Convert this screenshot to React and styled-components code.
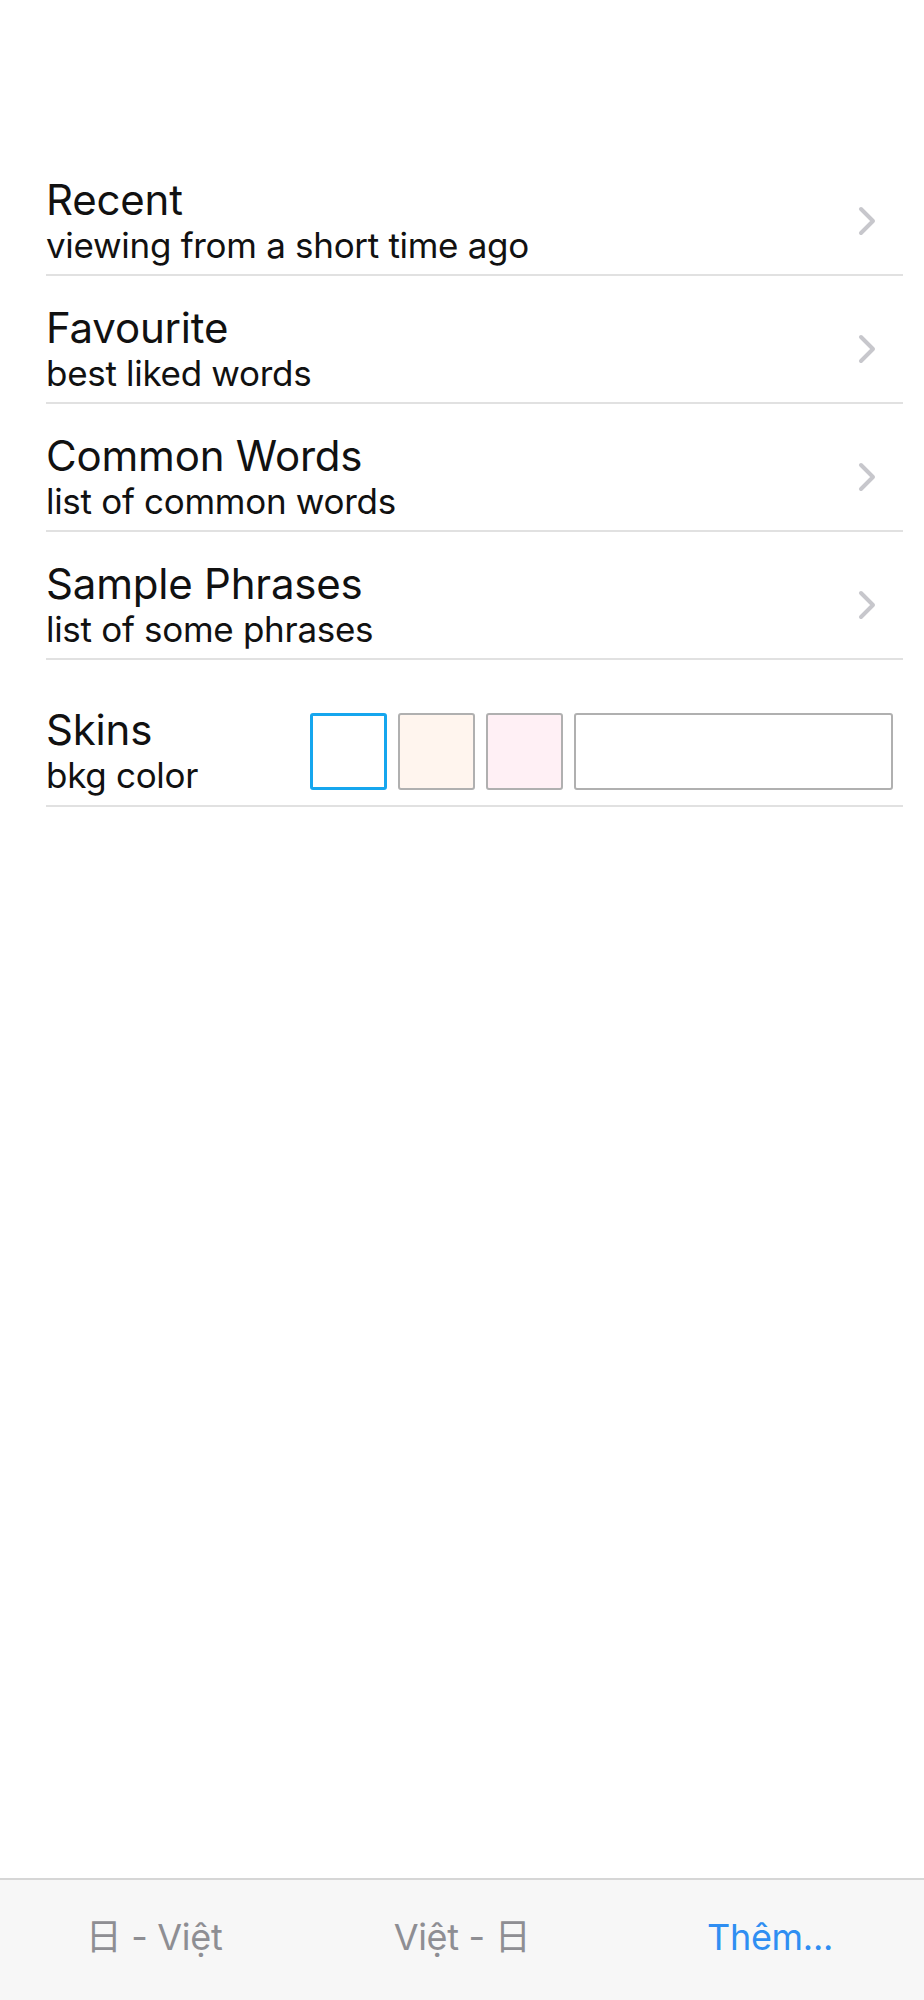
import React from "react";
import styled, { createGlobalStyle } from "styled-components";

const Global = createGlobalStyle`
  html, body { margin: 0; padding: 0; background: #ffffff; }
  body { font-family: Inter, "Liberation Sans", "Noto Sans CJK JP", sans-serif; }
  * { box-sizing: border-box; }
`;

const Screen = styled.div`
  min-height: 100vh;
  display: flex;
  flex-direction: column;
  background: #ffffff;
`;

const List = styled.div`
  padding: 148px 21px 0 46px;
  display: flex;
  flex-direction: column;
  flex: 1;
`;

const Row = styled.div`
  display: flex;
  align-items: center;
  justify-content: space-between;
  padding: ${(p) => (p.$skin ? "46px 10px 9px 0" : "28px 27px 8px 0")};
  border-bottom: 2px solid #e1e1e1;
`;

const TextBlock = styled.div`
  display: flex;
  flex-direction: column;
`;

const Title = styled.div`
  font-size: 42px;
  line-height: 48px;
  color: #111;
  letter-spacing: -0.2px;
`;

const Subtitle = styled.div`
  font-size: 35px;
  line-height: 42px;
  color: #111;
  letter-spacing: -0.3px;
`;

const Chevron = styled.svg`
  width: 18px;
  height: 30px;
  flex: none;
`;

const Swatches = styled.div`
  display: flex;
  gap: 11px;
  align-items: center;
`;

const Swatch = styled.div`
  width: ${(p) => (p.$wide ? "319px" : "77px")};
  height: 77px;
  background: ${(p) => p.$bg};
  border: ${(p) => (p.$active ? "3px solid #16a6ee" : "2px solid #b0b0b0")};
  border-radius: 3px;
`;

const TabBar = styled.div`
  height: 122px;
  background: #f7f7f7;
  border-top: 2px solid #d6d6d6;
  display: flex;
`;

const Tab = styled.div`
  flex: 1;
  display: flex;
  justify-content: center;
  padding-top: 36px;
  font-size: 36px;
  line-height: 42px;
  color: ${(p) => (p.$active ? "#2f8ef2" : "#8e8e93")};
  letter-spacing: -0.3px;
`;

const items = [
  { title: "Recent", sub: "viewing from a short time ago" },
  { title: "Favourite", sub: "best liked words" },
  { title: "Common Words", sub: "list of common words" },
  { title: "Sample Phrases", sub: "list of some phrases" },
];

function ChevronIcon() {
  return (
    <Chevron viewBox="0 0 18 30">
      <polyline
        points="3,3 15,15 3,27"
        fill="none"
        stroke="#c7c7cc"
        strokeWidth="4"
        strokeLinecap="round"
        strokeLinejoin="round"
      />
    </Chevron>
  );
}

export default function App() {
  return (
    <Screen>
      <Global />
      <List>
        {items.map((it) => (
          <Row key={it.title}>
            <TextBlock>
              <Title>{it.title}</Title>
              <Subtitle>{it.sub}</Subtitle>
            </TextBlock>
            <ChevronIcon />
          </Row>
        ))}
        <Row $skin>
          <TextBlock>
            <Title>Skins</Title>
            <Subtitle>bkg color</Subtitle>
          </TextBlock>
          <Swatches>
            <Swatch $bg="#ffffff" $active />
            <Swatch $bg="#fff5ee" />
            <Swatch $bg="#fff0f5" />
            <Swatch $bg="#ffffff" $wide />
          </Swatches>
        </Row>
      </List>
      <TabBar>
        <Tab>日 - Việt</Tab>
        <Tab>Việt - 日</Tab>
        <Tab $active>Thêm...</Tab>
      </TabBar>
    </Screen>
  );
}
